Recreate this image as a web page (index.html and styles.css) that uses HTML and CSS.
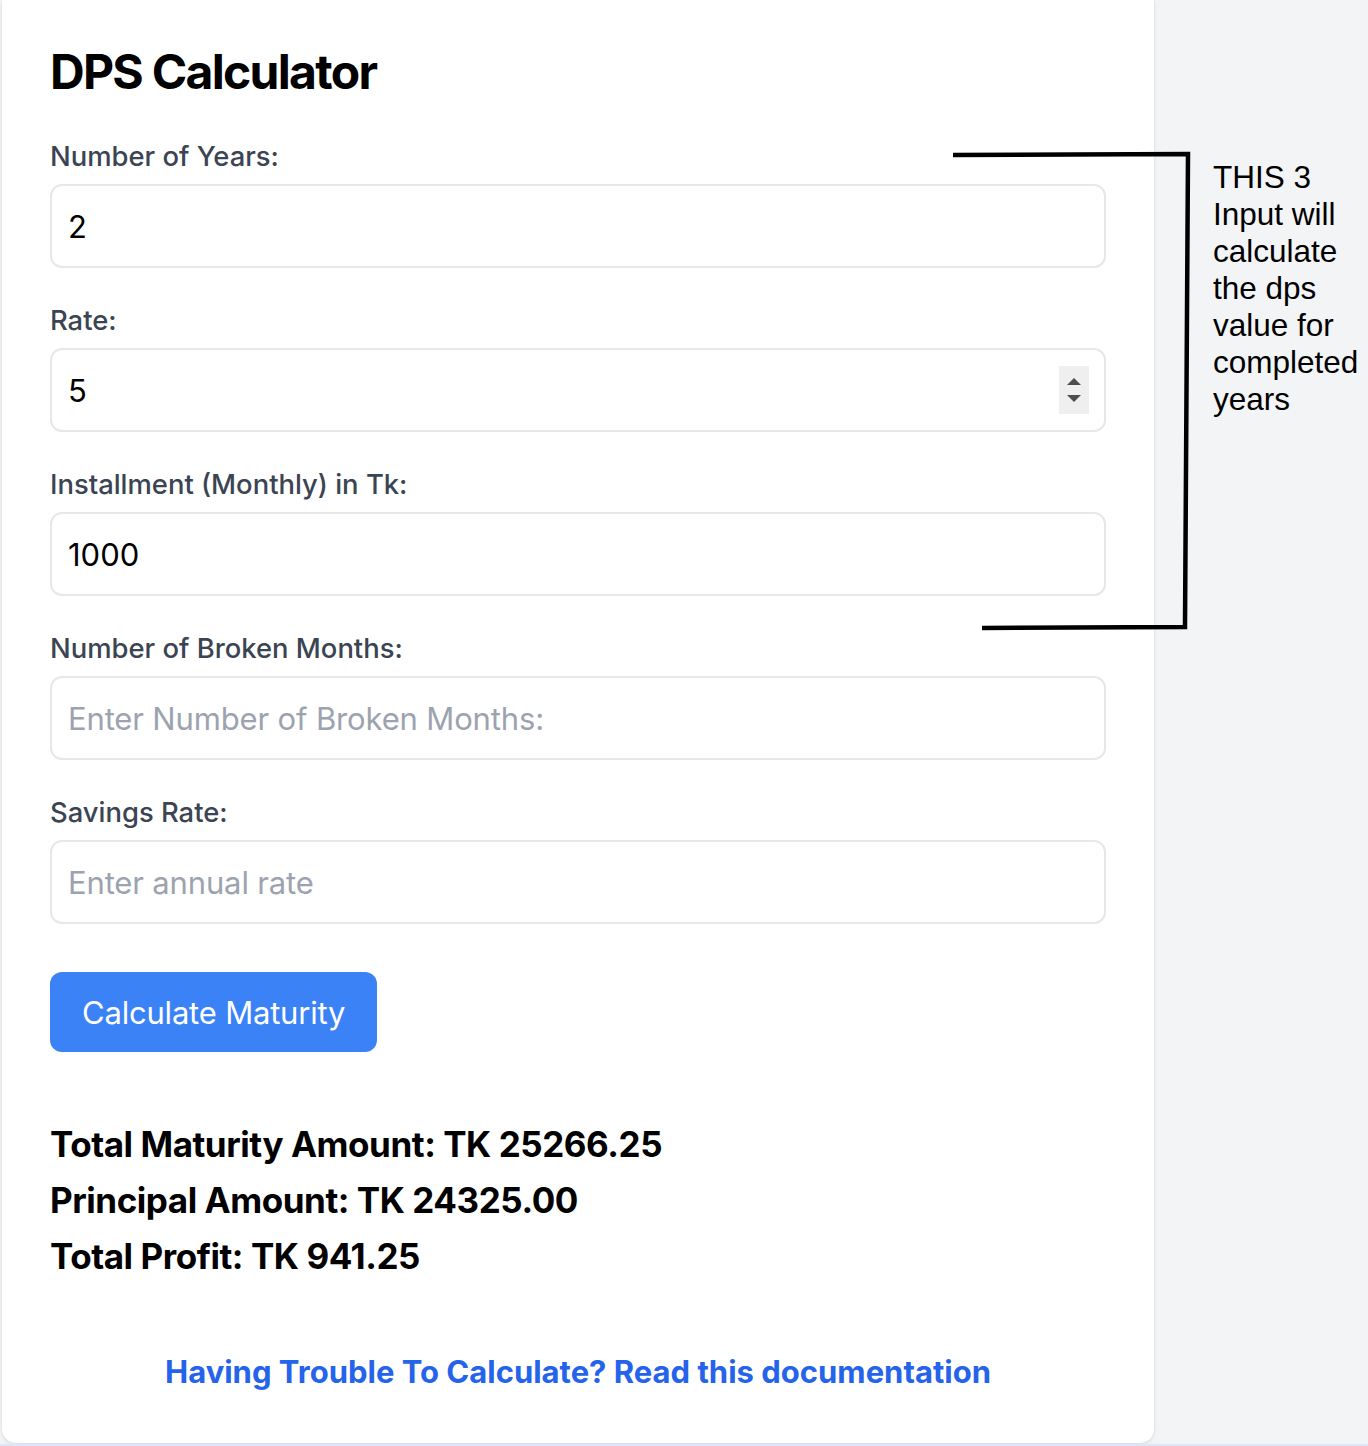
FILE: index.html
```html
<!DOCTYPE html>
<html lang="en">
<head>
<meta charset="utf-8">
<title>DPS Calculator</title>
<link rel="stylesheet" href="styles.css">
</head>
<body>
<div class="page">
  <main class="card">
    <h1 class="title">DPS Calculator</h1>
    <form class="form">
      <div class="field">
        <label class="label">Number of Years:</label>
        <input class="input" type="text" value="2">
      </div>
      <div class="field">
        <label class="label">Rate:</label>
        <div class="input-wrap">
          <input class="input" type="text" value="5">
          <span class="stepper"><span class="tri-up"></span><span class="tri-down"></span></span>
        </div>
      </div>
      <div class="field">
        <label class="label">Installment (Monthly) in Tk:</label>
        <input class="input" type="text" value="1000">
      </div>
      <div class="field">
        <label class="label">Number of Broken Months:</label>
        <input class="input" type="text" placeholder="Enter Number of Broken Months:">
      </div>
      <div class="field">
        <label class="label">Savings Rate:</label>
        <input class="input" type="text" placeholder="Enter annual rate">
      </div>
      <button class="btn" type="button">Calculate Maturity</button>
    </form>
    <div class="results">
      <p class="result">Total Maturity Amount: TK 25266.25</p>
      <p class="result">Principal Amount: TK 24325.00</p>
      <p class="result">Total Profit: TK 941.25</p>
    </div>
    <p class="doc"><a class="doc-link" href="#">Having Trouble To Calculate? Read this documentation</a></p>
  </main>
  <aside class="note">THIS 3<br>Input will<br>calculate<br>the dps<br>value for<br>completed<br>years</aside>
  <svg class="bracket" width="1368" height="700" viewBox="0 0 1368 700">
    <polyline points="953,155 1188,154 1185,627 982,628" fill="none" stroke="#000" stroke-width="4.5" stroke-linejoin="miter"/>
  </svg>
</div>
<div class="strip"></div>
</body>
</html>
```

FILE: styles.css
```css
* { box-sizing: border-box; }
html, body { margin: 0; padding: 0; }
body {
  background: #f3f4f6;
  font-family: Inter, "Noto Sans", "Liberation Sans", sans-serif;
  width: 1368px;
  height: 1446px;
  overflow: hidden;
  position: relative;
}
.page {
  display: flex;
  align-items: flex-start;
  position: relative;
}
.card {
  margin-left: 2px;
  width: 1152px;
  background: #fff;
  border-radius: 0 0 14px 14px;
  box-shadow: 0 2px 4px rgba(0,0,0,0.08), 0 0 2px rgba(0,0,0,0.08);
  padding: 48px 48px 47px;
}
.title {
  margin: 0 0 40px;
  font-size: 48px;
  line-height: 48px;
  font-weight: 700;
  letter-spacing: -1.7px;
  color: #000;
}
.form { display: flex; flex-direction: column; }
.field { display: flex; flex-direction: column; margin-bottom: 32px; }
.label {
  font-size: 27.4px;
  line-height: 40px;
  font-weight: 500;
  color: #3b4452;
  margin-bottom: 8px;
}
.input-wrap { position: relative; }
.input {
  width: 100%;
  height: 84px;
  border: 2px solid #e5e7eb;
  border-radius: 12px;
  padding: 0 16px;
  font-family: Inter, "Noto Sans", sans-serif;
  font-size: 31px;
  color: #000;
  background: #fff;
  outline: none;
}
.input::placeholder { color: #9ca3af; letter-spacing: -0.15px; }
.stepper {
  position: absolute;
  right: 17px;
  top: 18px;
  width: 30px;
  height: 48px;
  background: #efefef;
  display: flex;
  flex-direction: column;
  align-items: center;
  justify-content: center;
  gap: 10px;
}
.tri-up, .tri-down {
  width: 0; height: 0;
  border-left: 7px solid transparent;
  border-right: 7px solid transparent;
}
.tri-up { border-bottom: 7px solid #4d4d4d; }
.tri-down { border-top: 7px solid #4d4d4d; }
.btn {
  align-self: flex-start;
  margin-top: 16px;
  height: 80px;
  padding: 0 32px;
  background: #3b82f6;
  color: #fff;
  border: none;
  border-radius: 12px;
  font-family: Inter, "Noto Sans", sans-serif;
  font-size: 31px;
  font-weight: 400;
  letter-spacing: -0.2px;
}
.results { margin-top: 64px; }
.result {
  margin: 0;
  font-size: 35px;
  line-height: 56px;
  font-weight: 700;
  letter-spacing: -0.45px;
  color: #000;
}
.doc {
  margin: 64px 0 0;
  text-align: center;
  font-size: 31px;
  line-height: 48px;
  font-weight: 700;
  letter-spacing: 0;
}
.doc-link { color: #2563eb; text-decoration: none; }
.note {
  padding: 159px 0 0 59px;
  font-family: "Liberation Sans", Arial, sans-serif;
  font-size: 31.5px;
  line-height: 37px;
  color: #000;
}
.bracket {
  position: absolute;
  left: 0;
  top: 0;
  pointer-events: none;
}
.strip {
  position: absolute;
  left: 0;
  right: 0;
  bottom: 0;
  height: 2px;
  background: #dce7f9;
}
```
